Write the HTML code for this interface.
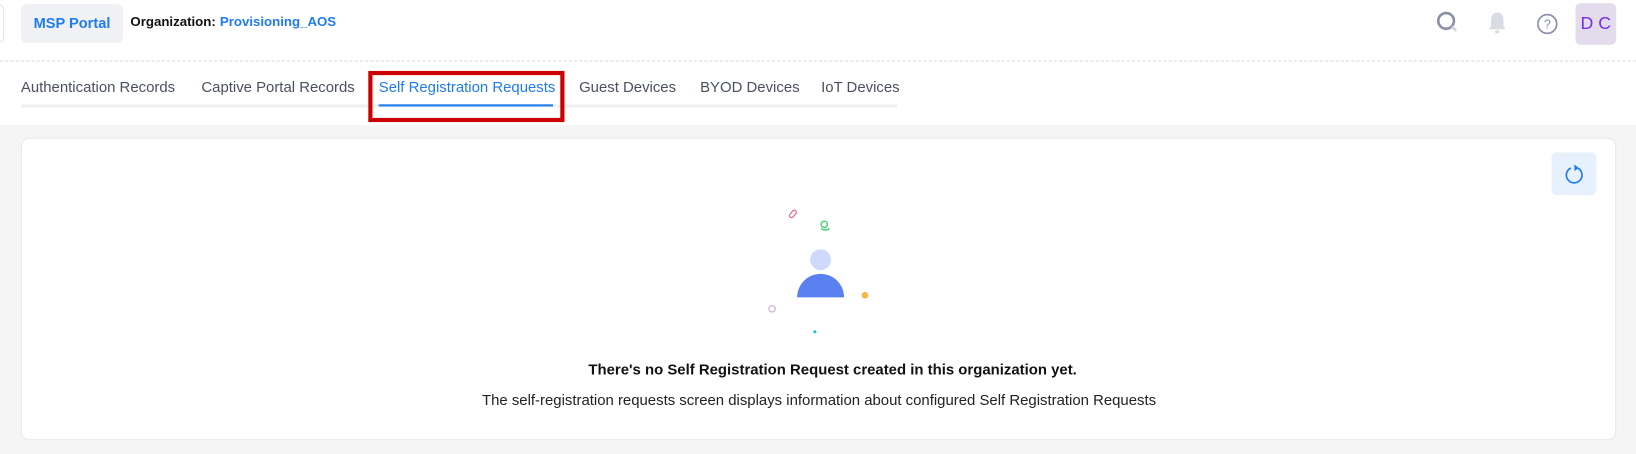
<!DOCTYPE html>
<html><head><meta charset="utf-8"><style>
*{margin:0;padding:0;box-sizing:border-box}
html,body{width:1636px;height:454px;overflow:hidden;background:#f5f5f5}
#w{width:1568px;height:436px;background:#f5f5f5;font-family:"Liberation Sans",sans-serif;position:relative;transform:scale(1.04337);transform-origin:0 0}
.top{position:absolute;left:0;top:0;width:1568px;height:120px;background:#fff}
.dash{position:absolute;left:0;top:58px;width:1568px;border-top:1px dashed #d8d8e0}
.msp{position:absolute;left:20px;top:4px;width:98px;height:37px;background:#f0f1f4;border-radius:6px;color:#1f7cf0;font-weight:bold;font-size:14px;line-height:37px;text-align:center}
.edge{position:absolute;left:-6px;top:4px;width:10px;height:37px;border:1px solid #e5e5e5;border-radius:6px}
.org{position:absolute;left:125px;top:14px;font-size:12.7px;font-weight:bold;color:#111}
.org span{color:#1f7cf0;margin-left:4px}
.tab{position:absolute;top:76px;font-size:14.3px;color:#4a5060}
.line{position:absolute;left:20px;top:100px;width:840px;height:3px;background:#eef0f3}
.act{position:absolute;left:363px;top:100px;width:167px;height:2px;background:#1f7cf0}
.red{position:absolute;left:353px;top:68px;width:188px;height:49px;border:4px solid #c00}
.av{position:absolute;left:1510px;top:3px;width:39px;height:40px;background:#e2dced;border-radius:5px;color:#7a2be6;font-size:17px;line-height:40px;text-align:center}
.card{position:absolute;left:20px;top:132px;width:1529px;height:290px;background:#fff;border:1px solid #e8e8ec;border-radius:8px}
.ref{position:absolute;left:1487px;top:146px;width:43px;height:41px;background:#e7f1fe;border-radius:5px}
.t1{position:absolute;left:0;width:1596px;top:347px;text-align:center;font-size:14.3px;font-weight:bold;color:#111}
.t2{position:absolute;left:0;width:1570px;top:376px;text-align:center;font-size:14.3px;color:#222}
</style></head><body><div id="w">
<div class="top"></div>
<div class="dash"></div>
<div class="edge"></div>
<div class="msp">MSP Portal</div>
<div class="org">Organization:<span>Provisioning_AOS</span></div>
<svg style="position:absolute;left:1376px;top:10px" width="24" height="24" viewBox="0 0 24 24"><circle cx="10" cy="10" r="7.5" fill="none" stroke="#8a90a8" stroke-width="2.5"/><path d="M15.5 15.5l4 4" stroke="#cfd3de" stroke-width="2.5"/></svg>
<svg style="position:absolute;left:1424px;top:10px" width="22" height="24" viewBox="0 0 22 24"><path d="M11 2c-4 0-6 3-6 7v6l-2 3h16l-2-3V9c0-4-2-7-6-7z" fill="#d9dce3"/><rect x="9" y="19" width="4" height="3" rx="1.5" fill="#d9dce3"/></svg>
<svg style="position:absolute;left:1472px;top:12px" width="22" height="22" viewBox="0 0 22 22"><circle cx="11" cy="11" r="9" fill="none" stroke="#8a90a8" stroke-width="1.6"/><text x="11" y="15.5" font-size="12" text-anchor="middle" fill="#8a90a8" font-family="Liberation Sans">?</text></svg>
<div class="av">D C</div>
<div class="tab" style="left:20px">Authentication Records</div>
<div class="tab" style="left:193px">Captive Portal Records</div>
<div class="tab" style="left:363px;color:#1f7cf0">Self Registration Requests</div>
<div class="tab" style="left:555px">Guest Devices</div>
<div class="tab" style="left:671px">BYOD Devices</div>
<div class="tab" style="left:787px">IoT Devices</div>
<div class="line"></div><div class="act"></div>
<div class="red"></div>
<div class="card"></div>
<div class="ref"><svg width="43" height="41" viewBox="0 0 43 41"><path d="M25 15a7.5 7.5 0 1 1-6.5 0" fill="none" stroke="#1f7cf0" stroke-width="1.6"/><path d="M22 11.5l4 3.5-4 3z" fill="#1f7cf0"/></svg></div>
<svg style="position:absolute;left:730px;top:195px" width="110" height="130" viewBox="0 0 110 130">
<rect x="26" y="8" width="8" height="4" rx="2" transform="rotate(-50 30 10)" fill="none" stroke="#e0708a" stroke-width="1.2"/>
<circle cx="60" cy="20" r="3" fill="none" stroke="#3bd16f" stroke-width="1.3"/><path d="M57 24c2 2 6 2 8 0" stroke="#3bd16f" fill="none" stroke-width="1.2"/>
<circle cx="56.5" cy="54" r="10" fill="#cfd9fb"/>
<path d="M34 90a22.5 22.5 0 0 1 45 0z" fill="#5b80f2"/>
<circle cx="99" cy="88" r="3.2" fill="#f5b94a"/>
<circle cx="10" cy="101" r="3" fill="none" stroke="#c9b8d8" stroke-width="1.2"/>
<circle cx="51" cy="123" r="1.5" fill="#22c0e0"/>
</svg>
<div class="t1">There's no Self Registration Request created in this organization yet.</div>
<div class="t2">The self-registration requests screen displays information about configured Self Registration Requests</div>
</div></body></html>
